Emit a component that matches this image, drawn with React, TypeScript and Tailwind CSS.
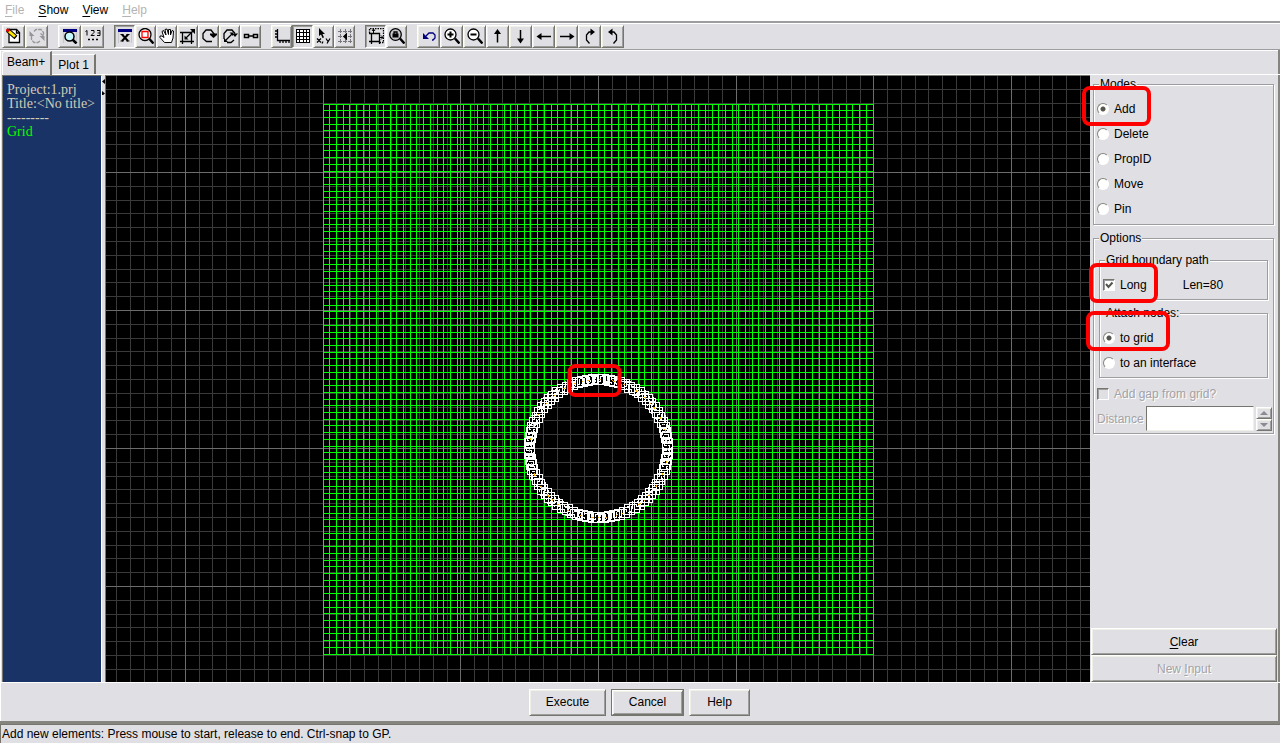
import React from "react";

const INK = "#000";

function Icon({ children, w = 16 }: { children: React.ReactNode; w?: number }) {
  return (
    <svg
      width={w}
      height="16"
      viewBox={`0 0 ${w} 16`}
      fill="none"
      stroke={INK}
      strokeWidth="1.3"
      aria-hidden="true"
      className="shrink-0"
    >
      {children}
    </svg>
  );
}

const icons: Record<string, React.ReactNode> = {
  edit: (
    <Icon>
      <path d="M3 1.5h7.500l3 3v10H3z" fill="#fff" />
      <path d="M10.500 1.500v3.500H14" />
      <path d="M1.500 2l8.500 7.500" stroke={INK} strokeWidth="4.500" />
      <path d="M2.500 3l6.500 5.500" stroke="#ffe800" strokeWidth="2.800" />
      <path d="M0.500 1.200l2.500 2.300" stroke="#e00000" strokeWidth="3" />
    </Icon>
  ),
  refresh: (
    <Icon>
      <path d="M5 3.500l2-2h5l2.500 3v3M11.500 5.500l3 2.500M11 13l-2 1.500H5L2.500 11.500V8" stroke="#96969a" strokeDasharray="4 1" />
      <path d="M0.500 3v5H5.500zM15.500 13V8h-5z" fill="#96969a" stroke="none" />
    </Icon>
  ),
  preview: (
    <Icon>
      <path d="M1.500 15V1.500h13V15" stroke="#c8c8cc" />
      <path d="M1 2h14" stroke="#000080" strokeWidth="3" shapeRendering="crispEdges" />
      <circle cx="7.500" cy="8.500" r="4.500" fill="#c7f7ff" strokeWidth="1.500" />
      <path d="M10.500 11.500l4 4" strokeWidth="2.500" />
    </Icon>
  ),
  digits: (
    <Icon>
      <path
        d="M0.500 3.500l1.500-1v5M6 2.500h3v2l-3 3h3.500M12 2.500h3v5h-3M12.500 5H15"
        strokeWidth="1"
      />
      <path d="M3 11.500h2M7 11.500h2M11 11.500h2" strokeWidth="1.500" />
    </Icon>
  ),
  close: (
    <Icon>
      <path d="M1.500 3v12M14.500 3v12" stroke="#c8c8cc" strokeWidth="1" />
      <path d="M1 2h14" stroke="#000080" strokeWidth="3" shapeRendering="crispEdges" />
      <path d="M5 6.500l6 6.500M11 6.500L5 13" strokeWidth="2" />
      <path d="M3.500 6.500h3M9.500 6.500h3M3.500 13h3M9.500 13h3" strokeWidth="1.200" />
    </Icon>
  ),
  zoomBox: (
    <Icon>
      <circle cx="7" cy="6.500" r="6" fill="#fff" />
      <path d="M4 3.500h6v6H4z" stroke="#ff0000" strokeWidth="1.300" />
      <path d="M11 10.500l4.500 5" strokeWidth="2.500" />
    </Icon>
  ),
  hand: (
    <Icon>
      <path
        d="M5.500 14.500L1 9.500V8h2l2 1.500L3 3.500l1.500-1L7 7 6 1.500 8 1l1.500 5.500V1.500h2V7l1.500-4.500 1.500.5L14 10l-1.500 4.500z"
        fill="#fff"
        strokeWidth="1"
      />
    </Icon>
  ),
  resize: (
    <Icon>
      <path d="M2.500 4.500h9v9h-9zM0 4.500h2M0 13.500h2M11.500 16v-2M2.500 16v-2M12 13.500h2" />
      <path d="M6 10l7-7" />
      <path d="M10 1h5v5zM4.500 7.500v4h4z" fill={INK} stroke="none" />
    </Icon>
  ),
  rotate: (
    <Icon>
      <path d="M11 13.500H5.500L2 10.500v-5L5 2h5l3.500 4.500" />
      <path d="M9 5.500h7V7l-3.500 3L9 7z" fill={INK} stroke="none" />
    </Icon>
  ),
  rotateScale: (
    <Icon>
      <path d="M2 11V5.500L5 2h5l3 3.500M5 14.500h4l3-2.500" />
      <path d="M3 13l7-7" />
      <path d="M7.500 4.500H11V8zM2 10v4h4zM10 5.500h6L13 9z" fill={INK} stroke="none" />
    </Icon>
  ),
  link: (
    <Icon>
      <path d="M1.500 6.500h4v3h-4zM10.500 6.500h4v3h-4zM5.500 8h5" strokeWidth="1.500" />
    </Icon>
  ),
  axes: (
    <Icon>
      <path d="M3.500 1v11.500H16M1 3h2M1 6h2M1 9h2M6 13v2M9 13v2M12 13v2M15 13v2" />
    </Icon>
  ),
  table: (
    <Icon>
      <path
        d="M1.500 1.500h13v13h-13zM4.500 1v14M8 1v14M11.500 1v14M1 4.500h14M1 8h14M1 11.500h14"
        fill="#fff"
        strokeWidth="1"
        shapeRendering="crispEdges"
      />
    </Icon>
  ),
  pointer: (
    <Icon>
      <path d="M3 0v8l2-1.500L6.500 10 8 9.500 6.500 6H9z" fill={INK} stroke="none" />
      <path d="M1 10.500l4 4M5 10.500l-4 4M7 13.500l-1 2M10 10.500l2 3M14 10.500l-3 5" strokeWidth="1.200" />
    </Icon>
  ),
  snap: (
    <Icon>
      <path
        d="M3.500 1v14M8.500 1v14M13.500 1v14M1 3.500h15M1 8.500h15M1 13.500h15"
        stroke="#77777b"
        strokeWidth="1"
        strokeDasharray="4 1"
      />
      <path d="M10 4.500v8l-4-4z" fill={INK} stroke="none" />
    </Icon>
  ),
  region: (
    <Icon>
      <path d="M1.500 5V0.500h14v14H12" strokeDasharray="1.500 1" />
      <path d="M3.500 5.500h8v8h-8zM1 5.500h2M1 13.500h2M3.500 16v-2M11.500 16v-2" />
      <path d="M5.500 5V1.500M4 3l1.500-2L7 3M11 9.500h4M13 7.500l2 2-2 2" strokeWidth="1" />
    </Icon>
  ),
  zoomLock: (
    <Icon>
      <circle cx="6.500" cy="6.500" r="5.800" fill="#c8c8cc" />
      <path d="M5 6V4h3v2" />
      <path d="M3.500 5.500h6v4h-6z" fill={INK} stroke="none" />
      <path d="M11 10.500l4.500 5" strokeWidth="2.500" />
    </Icon>
  ),
  undo: (
    <Icon>
      <path d="M5 8l3-3h4l2 2v3l-2 2h-1" stroke="#000080" />
      <path d="M2 5v6h6z" fill="#000080" stroke="none" />
    </Icon>
  ),
  zoomIn: (
    <Icon>
      <circle cx="6.500" cy="6.500" r="5.500" fill="#fff" />
      <path d="M3.500 6.500h6M6.500 3.500v6" strokeWidth="2" />
      <path d="M11 10.500l4.500 5" strokeWidth="2.500" />
    </Icon>
  ),
  zoomOut: (
    <Icon>
      <circle cx="6.500" cy="6.500" r="5.500" fill="#fff" />
      <path d="M3.500 6.500h6" strokeWidth="2" />
      <path d="M11 10.500l4.500 5" strokeWidth="2.500" />
    </Icon>
  ),
  up: (
    <Icon>
      <path d="M7.500 14.500V4" strokeWidth="1.500" />
      <path d="M7.500 1l3.500 5H4z" fill={INK} stroke="none" />
    </Icon>
  ),
  down: (
    <Icon>
      <path d="M7.500 2v10" strokeWidth="1.500" />
      <path d="M7.500 15.500l3.500-5H4z" fill={INK} stroke="none" />
    </Icon>
  ),
  left: (
    <Icon>
      <path d="M15 8.500H4" strokeWidth="1.500" />
      <path d="M0.500 8.500l5-3.500v7z" fill={INK} stroke="none" />
    </Icon>
  ),
  right: (
    <Icon>
      <path d="M1 8.500h11" strokeWidth="1.500" />
      <path d="M15.500 8.500l-5-3.500v7z" fill={INK} stroke="none" />
    </Icon>
  ),
  turnRight: (
    <Icon>
      <path d="M7.500 15.500L4.500 12V7L7 4h3" strokeWidth="1.300" />
      <path d="M8.500 0.500v7l4.500-3.500z" fill={INK} stroke="none" />
    </Icon>
  ),
  turnLeft: (
    <Icon>
      <path d="M8.500 15.500l3-3.500V7L9 4H6" strokeWidth="1.300" />
      <path d="M7.500 0.500v7L3 4z" fill={INK} stroke="none" />
    </Icon>
  ),
};

const raised =
  "border border-t-white border-l-white border-r-[#77766e] border-b-[#77766e] shadow-[inset_1px_1px_0_#f1f0e6,inset_-1px_-1px_0_#9f9e9e] bg-[#e0dfe3]";
const sunkenEdge =
  "border border-t-[#77766e] border-l-[#77766e] border-r-white border-b-white shadow-[inset_1px_1px_0_#9f9e9e]";

type Tool = { icon: string; label: string; on?: boolean };

function Tools({ items, size }: { items: Tool[]; size: string }) {
  return (
    <div className="flex">
      {items.map((t) => (
        <button
          key={t.icon}
          type="button"
          aria-label={t.label}
          className={`flex h-[23px] items-center justify-center ${size} ${t.on ? `${sunkenEdge} bg-[#e0dfe3]` : raised}`}
        >
          {icons[t.icon]}
        </button>
      ))}
    </div>
  );
}

const fileTools: Tool[] = [
  { icon: "edit", label: "Edit" },
  { icon: "refresh", label: "Refresh" },
];
const infoTools: Tool[] = [
  { icon: "preview", label: "Preview" },
  { icon: "digits", label: "Numbers" },
];
const viewTools: Tool[] = [
  { icon: "close", label: "Close view", on: true },
  { icon: "zoomBox", label: "Zoom box" },
  { icon: "hand", label: "Pan" },
  { icon: "resize", label: "Resize" },
  { icon: "rotate", label: "Rotate" },
  { icon: "rotateScale", label: "Rotate and scale" },
  { icon: "link", label: "Link" },
];
const gridTools: Tool[] = [
  { icon: "axes", label: "Axes" },
  { icon: "table", label: "Grid lines", on: true },
  { icon: "pointer", label: "Coordinates" },
  { icon: "snap", label: "Snap" },
];
const lockTools: Tool[] = [
  { icon: "region", label: "Region", on: true },
  { icon: "zoomLock", label: "Lock zoom" },
];
const moveTools: Tool[] = [
  { icon: "undo", label: "Undo" },
  { icon: "zoomIn", label: "Zoom in" },
  { icon: "zoomOut", label: "Zoom out" },
  { icon: "up", label: "Up" },
  { icon: "down", label: "Down" },
  { icon: "left", label: "Left" },
  { icon: "right", label: "Right" },
  { icon: "turnRight", label: "Turn clockwise" },
  { icon: "turnLeft", label: "Turn counterclockwise" },
];

const CX = 492;
const CY = 372;
const STEP_X = 13.77;
const STEP_Y = 13.8;
const span = (from: number, to: number) => Array.from({ length: to - from + 1 }, (_, i) => from + i);
const ring = (count: number, phase: number) =>
  span(0, count - 1).map((i) => {
    const a = ((i + phase) * Math.PI * 2) / count;
    return [Math.round(CX + 69 * Math.cos(a)), Math.round(CY + 69 * Math.sin(a))];
  });

function Plot() {
  const left = 217;
  const top = 28;
  const size = 550;
  const cells = 82;
  const nodes = ring(80, 0);
  const mids = ring(80, 0.5);
  const gridX = (n: number) => Math.round(CX + n * STEP_X);
  const gridY = (n: number) => Math.round(CY + n * STEP_Y);
  const minor = span(-150, 150).filter((n) => n % 10 !== 0);
  const major = span(-15, 15).map((n) => n * 10);
  return (
    <svg
      className="absolute inset-0 h-full w-full"
      shapeRendering="crispEdges"
      role="img"
      aria-label="Grid with circular lining"
    >
      {[
        { set: minor, color: "#3a3a3a" },
        { set: major, color: "#6c6c6c" },
      ].map(({ set, color }) => (
        <g key={color} fill={color}>
          {set.map((n) => (
            <React.Fragment key={n}>
              <rect x={gridX(n)} y="0" width="1" height="100%" />
              <rect x="0" y={gridY(n)} width="100%" height="1" />
            </React.Fragment>
          ))}
        </g>
      ))}
      <g fill="#00ff00">
        {span(0, cells).map((i) => {
          const d = Math.floor((i * size) / cells);
          return (
            <React.Fragment key={i}>
              <rect x={left + d} y={top} width="1" height={size + 1} />
              <rect x={left} y={top + d} width={size + 1} height="1" />
            </React.Fragment>
          );
        })}
      </g>
      <circle cx={CX + 0.5} cy={CY + 0.5} r="67" fill="#000" />
      <clipPath id="hole">
        <circle cx={CX + 0.5} cy={CY + 0.5} r="67" />
      </clipPath>
      <g clipPath="url(#hole)">
        {[-5, -4, -3, -2, -1, 1, 2, 3, 4, 5, 0].map((n) => (
          <g key={n} fill={n === 0 ? "#6c6c6c" : "#3a3a3a"}>
            <rect x={gridX(n)} y={CY - 70} width="1" height="140" />
            <rect x={CX - 70} y={gridY(n)} width="140" height="1" />
          </g>
        ))}
      </g>
      {nodes.map(([x, y], i) => (
        <rect key={i} x={x - 4} y={y - 4} width="9" height="9" fill="#000" />
      ))}
      {nodes.map(([x, y], i) => (
        <g key={i} fill="none" stroke="#fff">
          <rect x={x - 4.5} y={y - 4.5} width="10" height="10" />
          <path d={`M${x - 2} ${y - 2.5}h2M${x + 1} ${y + 2.5}h2M${x + 2.5} ${y - 3}v3M${x - 2.5} ${y + 1}v2`} />
        </g>
      ))}
      {mids.map(([x, y], i) => (
        <path
          key={i}
          d={
            i % 2
              ? `M${x - 4} ${y - 3.5}h8M${x - 4} ${y + 4.5}h8`
              : `M${x - 3.5} ${y - 4}v8M${x + 4.5} ${y - 4}v8`
          }
          stroke="#fff"
        />
      ))}
      <circle
        cx={CX + 0.5}
        cy={CY + 0.5}
        r="69"
        fill="none"
        stroke="#ffb000"
        strokeWidth="1"
        strokeDasharray="2 6 1 4 3 9"
      />
      <rect
        x="463.5"
        y="290"
        width="50"
        height="29"
        rx="6"
        fill="none"
        stroke="#f00"
        strokeWidth="4"
        shapeRendering="auto"
      />
    </svg>
  );
}

function Mark({ place }: { place: string }) {
  return (
    <span
      aria-hidden="true"
      className={`pointer-events-none absolute z-10 rounded-[8px] border-4 border-[#ff0000] ${place}`}
    />
  );
}

function Radio({ name, label, on, mark }: { name: string; label: string; on?: boolean; mark?: string }) {
  return (
    <label className="relative flex h-[25px] items-center gap-[5px]">
      <input
        type="radio"
        name={name}
        defaultChecked={on}
        className="m-0 h-3 w-3 appearance-none rounded-full border border-t-[#85847c] border-l-[#85847c] border-r-white border-b-white bg-white checked:bg-[radial-gradient(circle,#55544e_0_2px,transparent_3px)]"
      />
      {label}
      {mark && <Mark place={mark} />}
    </label>
  );
}

const group = "min-w-0 border border-[#9d9ca0] shadow-[1px_1px_0_#fff,inset_1px_1px_0_#fff]";
const caption = "ml-[2px] bg-[#e0dfe3] px-px leading-[14px]";
const embossed = "text-[#a3a2a6] [text-shadow:1px_1px_0_#fff]";

function Panel() {
  return (
    <aside className="flex w-[190px] shrink-0 flex-col border-r-2 border-[#85847f]">
      <div className="pt-[2px] pr-1 pl-[3px]">
        <fieldset className={`${group} h-[148px] px-[3px]`}>
          <legend className={caption}>Modes</legend>
          <div className="pt-[5px]">
            <Radio name="mode" label="Add" on mark="-top-[10px] -left-[15px] h-[40px] w-[69px]" />
            <Radio name="mode" label="Delete" />
            <Radio name="mode" label="PropID" />
            <Radio name="mode" label="Move" />
            <Radio name="mode" label="Pin" />
          </div>
        </fieldset>

        <fieldset className={`${group} mt-[6px] px-[3px]`}>
          <legend className={caption}>Options</legend>
          <div className="px-[2px] pt-2">
            <fieldset className={`${group} h-[47px] px-[3px]`}>
              <legend className={caption}>Grid boundary path</legend>
              <div className="flex items-center gap-9 pt-[5px]">
                <label className="relative flex h-[25px] items-center gap-[5px]">
                  <span className="relative flex">
                    <input type="checkbox" defaultChecked className={`h-3 w-3 appearance-none bg-white ${sunkenEdge}`} />
                    <svg
                      viewBox="0 0 12 12"
                      aria-hidden="true"
                      className="pointer-events-none absolute inset-0 h-3 w-3"
                    >
                      <path d="M3 5l2.500 3L9.500 3.500" fill="none" stroke="#55544e" strokeWidth="2" />
                    </svg>
                  </span>
                  Long
                  <Mark place="-top-[9px] -left-[14px] h-[40px] w-[69px]" />
                </label>
                <span>Len=80</span>
              </div>
            </fieldset>
            <fieldset className={`${group} mt-[6px] h-[72px] px-[3px]`}>
              <legend className={caption}>Attach nodes:</legend>
              <div className="pt-[5px]">
                <Radio name="attach" label="to grid" on mark="-top-[14px] -left-[17px] h-[40px] w-[84px]" />
                <Radio name="attach" label="to an interface" />
              </div>
            </fieldset>
          </div>
          <label className={`mt-[6px] flex h-5 items-center gap-[5px] ${embossed}`}>
            <input type="checkbox" disabled className={`h-3 w-3 appearance-none ${sunkenEdge}`} />
            Add gap from grid?
          </label>
          <div className="flex h-[29px] items-center gap-[2px]">
            <label htmlFor="distance" className={embossed}>
              Distance
            </label>
            <input
              id="distance"
              disabled
              className="h-[25px] min-w-0 flex-1 border border-t-[#77766e] border-l-[#77766e] border-r-[#f1f0e6] border-b-[#f1f0e6] bg-white px-1"
            />
            <div className="-mr-[2px] flex w-4 flex-col">
              {["M2 6l4-4 4 4z", "M2 2l4 4 4-4z"].map((d, i) => (
                <button
                  key={d}
                  type="button"
                  disabled
                  aria-label={i === 0 ? "Increase distance" : "Decrease distance"}
                  className={`flex h-[12px] items-center justify-center ${raised}`}
                >
                  <svg width="12" height="8" viewBox="0 0 12 8" aria-hidden="true">
                    <path d={d} fill="#8b8a8e" />
                  </svg>
                </button>
              ))}
            </div>
          </div>
        </fieldset>
      </div>
      <div className="mt-auto flex flex-col pr-px pl-px">
        <button type="button" className={`h-[27px] ${raised}`}>
          <span className="underline underline-offset-2">C</span>lear
        </button>
        <button type="button" disabled className={`h-[27px] ${raised} ${embossed}`}>
          New <span className="underline underline-offset-2">I</span>nput
        </button>
      </div>
    </aside>
  );
}

const menus = [
  { key: "F", rest: "ile", off: true },
  { key: "S", rest: "how", off: false },
  { key: "V", rest: "iew", off: false },
  { key: "H", rest: "elp", off: true },
];

export default function App() {
  return (
    <div className="flex min-h-screen flex-col bg-[#e0dfe3] font-['Liberation_Sans',Arial,sans-serif] text-[12px] leading-[14px] text-black">
      <nav className="flex h-[21px] items-center gap-[14px] bg-white px-[5px] pb-px">
        {menus.map((m) => (
          <button key={m.key} type="button" disabled={m.off} className={m.off ? "text-[#b4b4b4]" : ""}>
            <span className="underline underline-offset-2">{m.key}</span>
            {m.rest}
          </button>
        ))}
      </nav>
      <div className="flex h-[29px] items-center gap-[10px] border-t-2 border-b border-[#9d9ca0] pl-[2px] shadow-[inset_0_1px_0_#fff,0_1px_0_#fff]">
        <Tools items={fileTools} size="w-[23px]" />
        <Tools items={infoTools} size="w-[23px]" />
        <Tools items={viewTools} size="w-[21px]" />
        <Tools items={gridTools} size="w-[21px]" />
        <Tools items={lockTools} size="w-[21px]" />
        <Tools items={moveTools} size="w-[23px]" />
      </div>

      <div className="flex flex-1 flex-col border-l border-white shadow-[inset_-2px_0_0_#85847f]">
        <div className="flex h-[25px] items-end pl-px">
          <button
            type="button"
            className="h-[24px] rounded-tl-[3px] border-t border-r-2 border-l border-t-white border-r-[#77766e] border-l-white px-1 pr-[5px] pb-1"
          >
            Beam+
          </button>
          <div className="flex h-full flex-1 items-end border-b border-white">
            <button
              type="button"
              className="h-[20px] border-t border-r-2 border-t-white border-r-[#77766e] pr-[5px] pl-[6px]"
            >
              Plot 1
            </button>
          </div>
        </div>
        <div className="flex flex-1 border-b border-white pl-px">
          <div className="w-[100px] shrink-0 border-t border-r border-l border-t-[#77766e] border-r-white border-l-[#77766e] bg-[#1a3366] px-1 pt-[7px] font-['Liberation_Serif','Times_New_Roman',serif] text-[14px] leading-[14px] whitespace-nowrap text-[#d0cdb8]">
            <div>Project:1.prj</div>
            <div>Title:&lt;No title&gt;</div>
            <div>---------</div>
            <div className="text-[#00ff00]">Grid</div>
          </div>
          <div className="w-[3px] shrink-0">
            <svg width="3" height="20" viewBox="0 0 3 20" aria-hidden="true">
              <path d="M3 4v5L0 6.500zM0 16v5l3-2.500z" />
            </svg>
          </div>
          <main className="relative flex-1 border-t border-l border-[#77766e] bg-black">
            <Plot />
          </main>
          <Panel />
        </div>
        <div className="flex h-[38px] items-center justify-center gap-[5px] pr-[2px]">
          <button type="button" className={`h-[27px] w-[77px] ${raised}`}>
            Execute
          </button>
          <span className="flex border border-[#77766e]">
            <button type="button" className={`h-[25px] w-[71px] ${raised}`}>
              Cancel
            </button>
          </span>
          <button type="button" className={`h-[27px] w-[61px] ${raised}`}>
            Help
          </button>
        </div>
      </div>
      <footer className="flex h-[22px] items-center border-t-[3px] border-[#85847f] pl-[2px] shadow-[inset_1px_1px_0_#77766e]">
        Add new elements: Press mouse to start, release to end. Ctrl-snap to GP.
      </footer>
    </div>
  );
}
